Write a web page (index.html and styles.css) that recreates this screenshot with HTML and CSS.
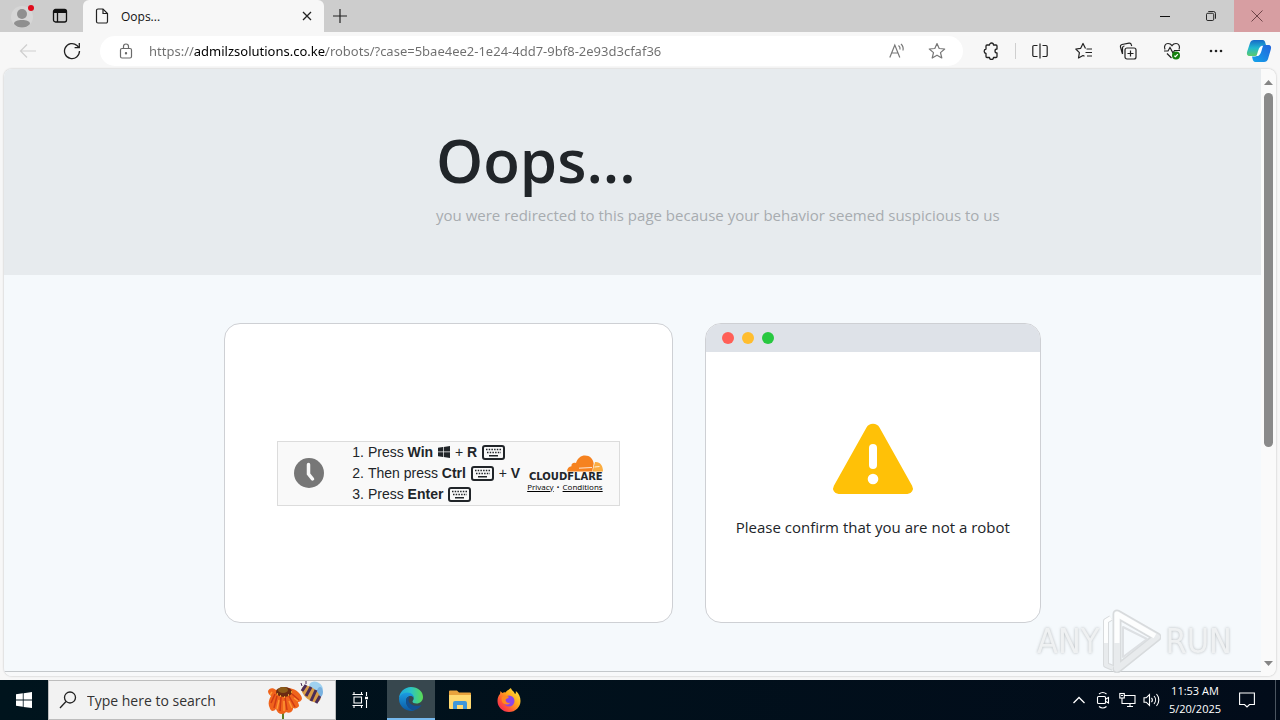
FILE: index.html
```
<!DOCTYPE html>
<html lang="en">
<head>
    <meta charset="UTF-8">
    <meta name="viewport" content="width=device-width, initial-scale=1.0">
    <title>Oops...</title>
    <link rel="stylesheet" href="styles.css">
</head>
<body>
    <div class="browser">
        <!-- Title bar -->
        <header class="titlebar">
            <button class="title-btn profile" aria-label="Profile">
                <svg width="24" height="26" viewBox="0 0 24 26"><circle cx="11" cy="14" r="11" fill="#d6d6d6"/><circle cx="11" cy="11" r="5" fill="#8f8f8f"/><path d="M3 21c0-3 3.500-4 8-4s8 1 8 4c-2 2.500-5 3.500-8 3.500S5 23.500 3 21z" fill="#8f8f8f"/><circle cx="20" cy="5" r="3" fill="#e00b1c"/></svg>
            </button>
            <button class="title-btn" aria-label="Tab actions">
                <svg width="16" height="16" viewBox="0 0 16 16" fill="none" stroke="#111" stroke-width="1.300"><rect x="1.500" y="1.500" width="13" height="12.500" rx="2"/><path d="M2 3.500h12" stroke-width="3"/><path d="M5.500 4v10"/></svg>
            </button>
            <div class="tab">
                <svg width="14" height="16" viewBox="0 0 14 16" fill="none" stroke="#222" stroke-width="1.200"><path d="M1.500 2.500a1.500 1.500 0 0 1 1.500-1.500h5l4.500 4.500v8a1.500 1.500 0 0 1-1.500 1.500H3a1.500 1.500 0 0 1-1.500-1.500z"/><path d="M8 1v4.500h4.500"/></svg>
                <span class="tab-title">Oops...</span>
                <button class="tab-close" aria-label="Close tab">
                    <svg width="10" height="10" viewBox="0 0 10 10" stroke="#222" stroke-width="1.300"><path d="M1 1l8 8M9 1L1 9"/></svg>
                </button>
            </div>
            <button class="new-tab" aria-label="New tab">
                <svg width="14" height="14" viewBox="0 0 14 14" stroke="#222" stroke-width="1.200"><path d="M7 0v14M0 7h14"/></svg>
            </button>
            <div class="window-controls">
                <button aria-label="Minimize">
                    <svg width="10" height="10" viewBox="0 0 10 10" stroke="#111"><path d="M0 5.500h10"/></svg>
                </button>
                <button aria-label="Restore">
                    <svg width="10" height="10" viewBox="0 0 11 11" fill="none" stroke="#111"><rect x=".500" y="2.500" width="8" height="8" rx="1.500"/><path d="M2.500.500h5.500a2.500 2.500 0 0 1 2.500 2.500v5.500"/></svg>
                </button>
                <button class="close" aria-label="Close">
                    <svg width="12" height="12" viewBox="0 0 12 12" stroke="#6e4448"><path d="M.500.500l11 11M11.500.500l-11 11"/></svg>
                </button>
            </div>
        </header>

        <!-- Toolbar -->
        <nav class="toolbar">
            <button class="tool" aria-label="Back">
                <svg width="18" height="16" viewBox="0 0 18 16" fill="none" stroke="#cfcfcf" stroke-width="1.200"><path d="M17 8H1.500M8 1.500L1.500 8 8 14.500"/></svg>
            </button>
            <button class="tool" aria-label="Refresh">
                <svg width="18" height="18" viewBox="0 0 18 18" fill="none" stroke="#222" stroke-width="1.300"><path d="M16.500 9a7.500 7.500 0 1 1-2.500-5.500l2 2"/><path d="M16.300 1v4.700h-4.700"/></svg>
            </button>
            <div class="address">
                <button aria-label="Site information">
                    <svg width="14" height="16" viewBox="0 0 14 16" fill="none" stroke="#6a6a6a" stroke-width="1.200"><rect x="1.500" y="5.500" width="11" height="9.500" rx="1.500"/><path d="M4.500 5.500V3.500a2.500 2.500 0 0 1 5 0v2"/><circle cx="7" cy="10.200" r=".600" fill="#6a6a6a"/></svg>
                </button>
                <input type="text" class="url" aria-label="Address" spellcheck="false" value="https://admilzsolutions.co.ke/robots/?case=5bae4ee2-1e24-4dd7-9bf8-2e93d3cfaf36">
                <button aria-label="Read aloud">
                    <svg width="16" height="16" viewBox="0 0 16 16" fill="none" stroke="#777" stroke-width="1.200"><path d="M.800 14.500L5.800 2l5 12.500M2.600 10h6.400M9.500 2.500a4 4 0 0 1 1.500 4M12 1a7 7 0 0 1 2 6.500"/></svg>
                </button>
                <button aria-label="Add to favorites">
                    <svg width="18" height="18" viewBox="0 0 18 18" fill="none" stroke="#777" stroke-width="1.200" stroke-linejoin="round"><path d="M9 1.500l2.200 5 5.500.500-4.200 3.600 1.300 5.400L9 13.200 4.200 16l1.300-5.400L1.300 7l5.500-.500z"/></svg>
                </button>
            </div>
            <button class="tool" aria-label="Extensions">
                <svg width="18" height="18" viewBox="0 0 18 18" fill="none" stroke="#222" stroke-width="1.300" stroke-linejoin="round"><path d="M5 3h2.500a2 2 0 0 1 4 0H14a1 1 0 0 1 1 1v3a2 2 0 1 0 0 4v3.500a1 1 0 0 1-1 1h-2.500a2 2 0 0 1-4 0H5a1 1 0 0 1-1-1V11.500a2.300 2.300 0 0 1 0-4.500V4a1 1 0 0 1 1-1z"/></svg>
            </button>
            <span class="divider"></span>
            <button class="tool" aria-label="Split screen">
                <svg width="16" height="16" viewBox="0 0 16 16" fill="none" stroke="#222" stroke-width="1.200"><path d="M5.500 2.500H2a1.200 1.200 0 0 0-1.200 1.200v8.600A1.200 1.200 0 0 0 2 13.500h3.500M10.500 2.500H14a1.200 1.200 0 0 1 1.200 1.200v8.600a1.200 1.200 0 0 1-1.200 1.200h-3.500M8 .500v15"/></svg>
            </button>
            <button class="tool" aria-label="Favorites">
                <svg width="18" height="18" viewBox="0 0 18 18" fill="none" stroke="#222" stroke-width="1.200" stroke-linejoin="round"><path d="M10.500 6.500L8 1.500 5.700 6.300.800 7l3.600 3.600-.9 5.400 4.500-2.500 1.500.800M11.500 7H17M10.500 10.500H17M12 14H17"/></svg>
            </button>
            <button class="tool" aria-label="Collections">
                <svg width="18" height="18" viewBox="0 0 18 18" fill="none" stroke="#222" stroke-width="1.200"><rect x="6" y="6" width="11" height="11" rx="2"/><path d="M11.500 8.500v6M8.500 11.500h6M3.500 12l-2-7A2 2 0 0 1 3 2.500l7-1.300a2 2 0 0 1 2.300 1.500l.400 1.300M3.500 12V6a2 2 0 0 1 2-2"/></svg>
            </button>
            <button class="tool" aria-label="Browser essentials">
                <svg width="18" height="18" viewBox="0 0 18 18" fill="none" stroke="#222" stroke-width="1.200"><path d="M2 7.500C.500 4 2.500 1.500 5 1.500c2 0 3.200 1 4 2.200.8-1.200 2-2.200 4-2.200 2.500 0 4.500 2.500 3 6M1 9h4l2-3.500L10 11l1.500-2.500H17M4 11.500l4.500 4.500"/><circle cx="13" cy="13.500" r="4" fill="#16810f" stroke="none"/><path d="M11.300 13.700l1.200 1 2.300-2.500" stroke="#fff"/></svg>
            </button>
            <button class="tool" aria-label="Settings and more">
                <svg width="14" height="4" viewBox="0 0 14 4" fill="#222"><circle cx="2" cy="2" r="1.300"/><circle cx="7" cy="2" r="1.300"/><circle cx="12" cy="2" r="1.300"/></svg>
            </button>
            <button class="tool copilot" aria-label="Copilot">
                <svg width="26" height="24" viewBox="0 0 26 24">
                    <defs>
                        <linearGradient id="cop1" x1="0" y1="0" x2="0" y2="1"><stop offset="0" stop-color="#1769c8"/><stop offset=".5" stop-color="#21b8d0"/><stop offset="1" stop-color="#5ccb6c"/></linearGradient>
                        <linearGradient id="cop2" x1="0" y1="1" x2="1" y2="0"><stop offset="0" stop-color="#13a5ea"/><stop offset="1" stop-color="#2464dc"/></linearGradient>
                    </defs>
                    <path d="M8 1h8.500c2 0 2.500 1.500 3 3.500L20 6h-2c-2 0-3 1-3.600 3l-1.600 5c-.6 2-1.600 3-3.800 3H4c-3 0-3.500-2-2.800-4.500L4 4c.6-2 2-3 4-3z" fill="url(#cop1)"/>
                    <path d="M18 23H9.500c-2 0-2.500-1.500-3-3.500L6 17.500h3c2 0 3-1.500 3.600-3.500l1.600-5c.6-2 1.600-3 3.800-3h4c3 0 3.500 2 2.800 4.500L22 20c-.6 2-2 3-4 3z" fill="url(#cop2)"/>
                    <path d="M15.500 7c-3 1-3.500 6-5 10h1.500c3-1 3.500-6 5-10z" fill="#fff"/>
                </svg>
            </button>
        </nav>

        <!-- Page -->
        <div class="viewport">
            <main class="page">
                <section class="hero">
                    <div class="container hero-text">
                        <h1>Oops...</h1>
                        <p>you were redirected to this page because your behavior seemed suspicious to us</p>
                    </div>
                </section>

                <section class="content">
                    <div class="container cards">
                        <div class="card steps-card">
                            <div class="widget">
                                <svg class="clock-icon" width="30" height="30" viewBox="0 0 30 30"><circle cx="15" cy="15" r="15" fill="#777"/><path d="M14.500 6.500V16l4 5" fill="none" stroke="#f9f9f9" stroke-width="3.500" stroke-linecap="round"/></svg>
                                <ol class="steps">
                                    <li>Press <b>Win</b>
                                        <svg width="12" height="12" viewBox="0 0 12 12" fill="#212529"><path d="M0 1.700L5 1v4.600H0zM5.700.900L12 0v5.600H5.700zM0 6.300h5V11l-5-.700zM5.700 6.300H12V12l-6.300-.900z"/></svg>
                                        + <b>R</b>
                                        <svg class="key" width="23" height="15" viewBox="0 0 23 15"><use href="#keyboard"/></svg>
                                    </li>
                                    <li>Then press <b>Ctrl</b>
                                        <svg class="key" width="23" height="15" viewBox="0 0 23 15"><use href="#keyboard"/></svg>
                                        + <b>V</b>
                                    </li>
                                    <li>Press <b>Enter</b>
                                        <svg class="key" width="23" height="15" viewBox="0 0 23 15"><use href="#keyboard"/></svg>
                                    </li>
                                </ol>
                                <div class="brand">
                                    <svg width="36" height="17" viewBox="0 0 36 17"><path d="M0 16.500c0-3 2-5 4.500-5.200C4 8.500 6.500 7 9 8 10.500 3 14 .500 18 .500c5 0 8 3.500 8.700 8l-1.500 8z" fill="#f6821f"/><path d="M25.500 16.500l2.500-9.500c5-.500 8 3.500 8 9.500z" fill="#fbad41"/><path d="M12 13.200l13-.700M27.500 12l5-.500" stroke="#fff" stroke-width=".8" fill="none"/></svg>
                                    <span class="brand-name">CLOUDFLARE</span>
                                    <span class="brand-links"><a href="#">Privacy</a><span>•</span><a href="#">Conditions</a></span>
                                </div>
                            </div>
                        </div>

                        <div class="card robot-card">
                            <div class="card-bar">
                                <span class="dot red"></span>
                                <span class="dot yellow"></span>
                                <span class="dot green"></span>
                            </div>
                            <div class="robot-body">
                                <svg width="82" height="72" viewBox="0 0 82 72"><path d="M34.500 4.500a7.500 7.500 0 0 1 13 0l32.600 58.200a5.500 5.500 0 0 1-4.800 8.300H6.700a5.500 5.500 0 0 1-4.800-8.300z" fill="#ffc107"/><path d="M41 25v17" stroke="#fff" stroke-width="8" stroke-linecap="round"/><circle cx="41" cy="56" r="5.300" fill="#fff"/></svg>
                                <p>Please confirm that you are not a robot</p>
                            </div>
                        </div>
                    </div>
                </section>
                <footer class="page-footer"></footer>
            </main>
            <div class="scrollbar">
                <svg width="9" height="5" viewBox="0 0 9 5" fill="#858585"><path d="M4.500 0L9 5H0z"/></svg>
                <div class="track"><div class="thumb"></div></div>
                <svg width="9" height="5" viewBox="0 0 9 5" fill="#858585"><path d="M4.500 5L0 0h9z"/></svg>
            </div>
        </div>
    </div>

    <!-- Taskbar -->
    <footer class="taskbar">
        <button class="task start" aria-label="Start">
            <svg width="16" height="16" viewBox="0 0 16 16" fill="#fff"><path d="M0 2.300L6.800 1.300v6.300H0zM7.600 1.200L16 0v7.600H7.600zM0 8.400h6.800v6.400L0 13.800zM7.600 8.400H16V16l-8.400-1.100z"/></svg>
        </button>
        <div class="search">
            <svg width="18" height="18" viewBox="0 0 18 18" fill="none" stroke="#222" stroke-width="1.300"><circle cx="11" cy="6.500" r="5.500"/><path d="M7 10.500L1 17"/></svg>
            <input type="text" aria-label="Search" placeholder="Type here to search">
            <svg width="58" height="38" viewBox="0 0 58 38">
                <path d="M16 28v10" stroke="#5f7f24" stroke-width="2"/>
                <path d="M9 9C6 6 2 7 1 10c0 3 2 4 3 5-2 3-3 7-2 10 1 2 1 4 3 5 2 0 3-1 4-2 1 3 3 5 6 5 2 0 3-1 4-2 2 1 5 1 6-1 1-1 1-2 1-3 2 1 5 0 6-2 0-2-1-3-1-4 2 0 3-1 4-3 0-3-2-5-4-7-4-4-14-6-22-2z" fill="#f0641c"/>
                <path d="M8 13L4 22M10 15L7 27M14 16l-1 14M18 16l2 13M22 15l6 11M25 13l7 6" stroke="#cf3a15" stroke-width="1.500"/>
                <path d="M5 11l-2 3M12 19l-2 9M17 20v10M22 20l3 7M27 17l4 3" stroke="#ff9a35" stroke-width="1.400"/>
                <ellipse cx="17" cy="11" rx="8" ry="5" fill="#6b2b12"/><ellipse cx="16" cy="9" rx="5" ry="3" fill="#8b5b18"/>
                <path d="M10 13h1M13 15h1M17 16h1M21 14h1M24 11h1" stroke="#ffc53a" stroke-width="1.500"/>
                <ellipse cx="49" cy="6" rx="7" ry="5" transform="rotate(25 49 6)" fill="#9fd1f0"/>
                <ellipse cx="53" cy="11" rx="3" ry="5" fill="#79b1df"/>
                <ellipse cx="44" cy="13" rx="11" ry="6" transform="rotate(38 44 13)" fill="#d99c46"/>
                <path d="M39 4l-4 6M44 6l-5 9M49 9l-5 11M53 15l-4 7" stroke="#4a2c58" stroke-width="3"/>
                <path d="M35 5l-1-3M39 3V0" stroke="#4a2c58"/>
            </svg>
        </div>
        <button class="task view" aria-label="Task view">
            <svg width="16" height="16" viewBox="0 0 16 16" fill="none" stroke="#fff" stroke-width="1.100"><path d="M.500 2.500h10.500M.500 13.500h10.500M2 5h7.500v6H2zM2 0v2.500M9.500 0v2.500M2 13.500V16M9.500 13.500V16M14.500 0v4M14.500 8v8"/><path d="M13 6h3" stroke-width="2.500"/></svg>
        </button>
        <button class="task active" aria-label="Microsoft Edge">
            <svg width="24" height="24" viewBox="0 0 24 24">
                <defs>
                    <linearGradient id="edge1" x1="0" y1="0" x2="1" y2="0"><stop offset="0" stop-color="#1da5df"/><stop offset=".5" stop-color="#2bc4c5"/><stop offset="1" stop-color="#5bdc52"/></linearGradient>
                    <linearGradient id="edge2" x1="0" y1="0" x2="0" y2="1"><stop offset="0" stop-color="#1b9de2"/><stop offset="1" stop-color="#0c59a4"/></linearGradient>
                </defs>
                <path d="M0 11C.500 5 5.500 0 12 0c7 0 12 4.500 12 10 0 4-3 6.500-6.500 6.500-2.500 0-4-1-4-2 0-.800 1.200-1.200 1.200-3.200C14.700 8.500 12 6.500 9 6.500c-4 0-7.500 2-9 4.500z" fill="url(#edge1)"/>
                <path d="M0 12c0-3.500 4-6.500 8.500-6.500 4 0 6.300 2.800 6.300 5.500-.8-1.500-2-2-3.300-2C8.500 9 7 11.500 7 14c0 5 4 9 9 9.200A12 12 0 0 1 0 12z" fill="url(#edge2)"/>
                <path d="M10.500 9.500C8 10 7 12 7 14c0 5.500 5 9.500 9 9 3-1 5.500-3 6.500-5-.5-.3-1.500.8-5 .8-5 0-8.500-3.300-8-6.800z" fill="#124f93"/>
            </svg>
        </button>
        <button class="task" aria-label="File Explorer">
            <svg width="22" height="20" viewBox="0 0 22 20"><path d="M0 1.500A1 1 0 0 1 1 .500h7l2 2h11a1 1 0 0 1 1 1V18H0z" fill="#e8a33d"/><path d="M0 5h22v13a1 1 0 0 1-1 1H1a1 1 0 0 1-1-1z" fill="#ffd970"/><path d="M4 19v-6a2 2 0 0 1 2-2h10a2 2 0 0 1 2 2v6h-4v-4H8v4z" fill="#3f97d9"/></svg>
        </button>
        <button class="task" aria-label="Firefox">
            <svg width="24" height="24" viewBox="0 0 24 24">
                <defs><linearGradient id="fox" x1="1" y1="0" x2="0" y2="1"><stop offset="0" stop-color="#fff04a"/><stop offset=".4" stop-color="#ffab1a"/><stop offset=".7" stop-color="#ff5336"/><stop offset="1" stop-color="#ed1166"/></linearGradient></defs>
                <path d="M14 0c0 2 3 3 4 6 1-.500 1-2 .800-3C22 5.500 23.500 9 23.500 13c0 6-5 11-11.500 11S.500 19 .500 13c0-3 1-5.500 2.500-7L3.500 3c.8 1 1.300 1.500 2 2 1-.8 2-.8 3-.6C9.500 3 12 1.500 14 0z" fill="url(#fox)"/>
                <circle cx="12" cy="13" r="5.500" fill="#8b45e6"/>
                <path d="M5 9c3-2 5-1 7 0-1 1.500-3 1.500-3.500 3 .5 2.500 3 3.500 5 2.500-1 2-6 3-8 0-1-1.500-1.300-4-.5-5.500z" fill="#ff8a1e"/>
            </svg>
        </button>
        <div class="tray">
            <button aria-label="Show hidden icons">
                <svg width="12" height="8" viewBox="0 0 12 8" fill="none" stroke="#fff" stroke-width="1.300"><path d="M.500 7L6 1.500 11.500 7"/></svg>
            </button>
            <button aria-label="Meet now">
                <svg width="14" height="18" viewBox="0 0 14 18" fill="none" stroke="#fff" stroke-width="1.100"><rect x="1.500" y="5.500" width="8" height="7" rx="1"/><path d="M9.500 8.300L12.500 6.500v5.500L9.500 10.200M3 3a6 6 0 0 1 7.500 0M3 15.500a6 6 0 0 0 7.500 0"/></svg>
            </button>
            <button aria-label="Network">
                <svg width="17" height="16" viewBox="0 0 17 16" fill="none" stroke="#fff" stroke-width="1.100"><path d="M5 3.500h11v8H5M8 14.500h6M11 11.500v3M3 6v5.500h2"/><rect x=".800" y="1.500" width="4.500" height="4.500"/><path d="M2 3.500h2"/></svg>
            </button>
            <button aria-label="Volume">
                <svg width="17" height="14" viewBox="0 0 17 14" fill="none" stroke="#fff" stroke-width="1.100"><path d="M1 4.800h2.200L6.500 1.500v11L3.200 9.200H1zM8.500 4.800a3.500 3.500 0 0 1 0 4.400M11 3a6 6 0 0 1 0 8M13.500 1a9 9 0 0 1 0 12"/></svg>
            </button>
            <div class="clock">
                <span>11:53 AM</span>
                <span>5/20/2025</span>
            </div>
            <button class="notify" aria-label="Notifications">
                <svg width="16" height="16" viewBox="0 0 16 16" fill="none" stroke="#fff" stroke-width="1.100"><path d="M.600 1h14.800v11.500H10.500L8 15l-2.500-2.500H.600z"/></svg>
            </button>
            <span class="show-desktop"></span>
        </div>
    </footer>

    <div class="watermark">
        <span>ANY</span>
        <svg width="58" height="64" viewBox="0 0 58 64" fill="none" stroke-linejoin="round">
            <path d="M14 5L54 28 14 60z" stroke="#d3d6d8" stroke-width="9"/>
            <path d="M8 9L3 12v44l7 3" stroke="#d3d6d8" stroke-width="6"/>
            <path d="M14 5L54 28 14 60z" stroke="#e6e9eb" stroke-width="6"/>
            <path d="M14 34V5l38 22" stroke="#fff" stroke-width="5"/>
            <path d="M8 9L3 12v22" stroke="#fff" stroke-width="4"/>
            <path d="M3 34v22l7 3" stroke="#e6e9eb" stroke-width="4"/>
            <path d="M20 18v30l24-18z" stroke="#d9dcdf" stroke-width="2"/>
        </svg>
        <span>RUN</span>
    </div>

    <!-- Shared icon -->
    <svg class="sprite" aria-hidden="true">
        <symbol id="keyboard" viewBox="0 0 23 15">
            <rect x="1" y="1" width="21" height="13" rx="2" fill="none" stroke="#212529" stroke-width="2"/>
            <path d="M4 4.500h15M5 7.500h14" stroke="#212529" stroke-width="1.500" stroke-dasharray="1.500 1.200"/>
            <path d="M7 10.700h9" stroke="#212529" stroke-width="1.500"/>
        </symbol>
    </svg>
</body>
</html>
```

FILE: styles.css
```
:root {
    --chrome: #f7f7f7;
    --titlebar: #cdcdcd;
    --text: #212529;
    --border: #ced0d4;
    --ui-font: 'Open Sans', 'Noto Sans', sans-serif;
}

* {
    margin: 0;
    padding: 0;
    box-sizing: border-box;
}

body {
    display: flex;
    flex-direction: column;
    height: 100vh;
    overflow: hidden;
    background-color: var(--chrome);
    color: var(--text);
    font-family: var(--ui-font);
}

button {
    display: flex;
    align-items: center;
    justify-content: center;
    border: none;
    background: none;
    cursor: pointer;
}

input {
    min-width: 0;
    border: none;
    outline: none;
    background: none;
    font-family: inherit;
}

svg {
    flex-shrink: 0;
}

.sprite {
    display: none;
}

.browser {
    flex: 1;
    min-height: 0;
    display: flex;
    flex-direction: column;
}

/* Title bar */
.titlebar {
    display: flex;
    height: 32px;
    padding-left: 3px;
    background-color: var(--titlebar);
}

.title-btn {
    width: 40px;
}

.title-btn + .title-btn {
    padding-right: 6px;
}

.tab {
    display: flex;
    align-items: center;
    gap: 12px;
    width: 241px;
    padding: 0 10px 0 12px;
    border-radius: 6px 6px 0 0;
    background-color: var(--chrome);
}

.tab-title {
    flex: 1;
    font-size: 12px;
    color: #111;
}

.tab-close {
    width: 14px;
    height: 14px;
}

.new-tab {
    width: 32px;
}

.window-controls {
    display: flex;
    margin-left: auto;
}

.window-controls button {
    width: 46px;
}

.window-controls .close {
    background-color: #d79ea2;
}

/* Toolbar */
.toolbar {
    display: flex;
    align-items: center;
    height: 37px;
    padding-left: 6px;
}

.tool {
    width: 44px;
    height: 32px;
}

.tool.copilot {
    width: 42px;
}

.address {
    flex: 1;
    display: flex;
    align-items: center;
    height: 30px;
    margin: 0 6px;
    padding: 0 6px;
    border-radius: 15px;
    background-color: #fff;
}

.address button {
    width: 40px;
    height: 28px;
}

.url {
    flex: 1;
    margin-left: 3px;
    font-family: 'Noto Sans', sans-serif;
    font-size: 13px;
    line-height: 20px;
    color: transparent;
    background-image: linear-gradient(90deg, #6e6e6e 45px, #000 45px, #000 177px, #6e6e6e 177px);
    -webkit-background-clip: text;
    background-clip: text;
}

.divider {
    width: 1px;
    height: 16px;
    margin: 0 2px;
    background-color: #cfcfcf;
}

/* Page */
.viewport {
    flex: 1;
    min-height: 0;
    display: flex;
    margin: 0 4px 4px;
    border-radius: 8px;
    overflow: hidden;
    box-shadow: 0 0 2px #b0b0b0;
}

.page {
    flex: 1;
    display: flex;
    flex-direction: column;
    background-color: #f5f9fc;
}

.container {
    width: 100%;
    max-width: 817px;
    margin: 0 auto;
}

.hero {
    padding: 48px 0;
    background-color: #e7ebee;
}

.hero-text {
    padding-left: 212px;
}

.hero h1 {
    font-size: 60px;
    font-weight: 600;
    line-height: 86px;
}

.hero p {
    font-size: 15px;
    line-height: 24px;
    white-space: nowrap;
    color: #a7acb0;
}

.content {
    padding: 48px 0;
}

.cards {
    display: grid;
    grid-template-columns: 4fr 3fr;
    gap: 32px;
}

.card {
    min-height: 300px;
    border: 1px solid var(--border);
    border-radius: 16px;
    background-color: #fff;
    overflow: hidden;
}

.steps-card {
    display: flex;
    align-items: center;
    justify-content: center;
}

.widget {
    display: flex;
    align-items: center;
    padding: 0 16px;
    border: 1px solid #dcdcdc;
    background-color: #f9f9f9;
}

.steps {
    margin-left: 44px;
    margin-right: 7px;
    font-family: 'Liberation Sans', Arial, sans-serif;
    font-size: 14px;
    line-height: 21px;
    white-space: nowrap;
    list-style-type: decimal;
}

.steps svg {
    margin: 0 1px;
    vertical-align: -1px;
}

.steps .key {
    vertical-align: -3px;
}

.brand {
    display: flex;
    flex-direction: column;
    align-items: flex-end;
}

.brand-name {
    font-family: 'DejaVu Sans', sans-serif;
    font-size: 10px;
    font-weight: 700;
    line-height: 10px;
}

.brand-links {
    display: flex;
    gap: 3px;
    font-size: 8px;
    line-height: 10px;
}

.brand-links a {
    color: #000;
}

.robot-card {
    display: flex;
    flex-direction: column;
}

.card-bar {
    display: flex;
    align-items: center;
    gap: 8px;
    height: 28px;
    padding: 0 16px;
    background-color: #dee2e8;
}

.dot {
    width: 12px;
    height: 12px;
    border-radius: 50%;
}

.red {
    background-color: #ff5f57;
}

.yellow {
    background-color: #ffbd2e;
}

.green {
    background-color: #28c840;
}

.robot-body {
    flex: 1;
    display: flex;
    flex-direction: column;
    align-items: center;
    padding-top: 71px;
}

.robot-body p {
    margin-top: 20px;
    font-size: 15px;
    line-height: 24px;
}

.page-footer {
    flex: 1;
    border-top: 1px solid #c4c8cb;
    background-color: #f8f9fa;
}

.scrollbar {
    display: flex;
    flex-direction: column;
    align-items: center;
    width: 15px;
    padding: 11px 0 10px;
    background-color: #fafafa;
}

.track {
    flex: 1;
    width: 9px;
    margin: 8px 0 6px;
}

.thumb {
    height: 63%;
    border-radius: 5px;
    background-color: #8a8a8a;
}

/* Taskbar */
.taskbar {
    display: flex;
    height: 40px;
    background: linear-gradient(90deg, #00141d, #020c1a);
    color: #fff;
}

.task {
    width: 49px;
}

.task.start {
    width: 48px;
}

.task.view {
    width: 51px;
    padding-right: 3px;
}

.task.active {
    width: 48px;
    border-bottom: 2px solid #76b9ed;
    background-color: #37474e;
}

.task svg {
    display: block;
}

.search {
    display: flex;
    align-items: center;
    width: 288px;
    padding: 0 10px;
    border: 1px solid #bdbdbd;
    background-color: #f2f2f2;
}

.search input {
    flex: 1;
    padding-left: 10px;
    font-size: 14px;
}

.search input::placeholder {
    color: #333;
}

.tray {
    display: flex;
    margin-left: auto;
}

.tray button {
    width: 24px;
}

.clock {
    display: flex;
    flex-direction: column;
    justify-content: center;
    width: 64px;
    font-size: 11px;
    line-height: 18px;
    text-align: center;
}

.tray .notify {
    width: 40px;
    margin-right: 8px;
}

.show-desktop {
    width: 5px;
    border-left: 1px solid #4b5560;
}

/* Overlay logo in the corner of the screen */
.watermark {
    position: absolute;
    right: 48px;
    bottom: 47px;
    display: flex;
    align-items: center;
    gap: 4px;
    font-family: 'DejaVu Sans Condensed', 'DejaVu Sans', sans-serif;
    font-size: 34px;
    color: #eef0f1;
    text-shadow: 0 0 3px #a9adb0;
    opacity: 0.85;
    pointer-events: none;
}
```
